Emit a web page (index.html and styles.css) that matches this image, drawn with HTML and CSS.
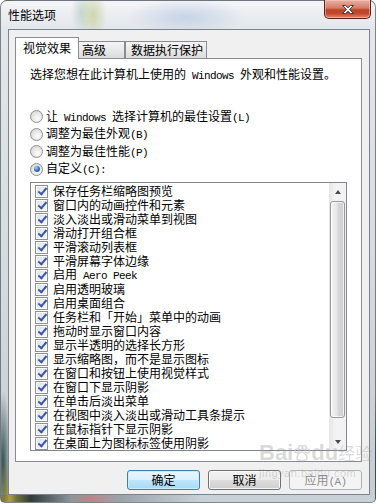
FILE: index.html
```html
<!DOCTYPE html>
<html>
	<head>
		<meta charset="utf-8">
		<title>性能选项</title>
		<link rel="stylesheet" href="styles.css">
	</head>
	<body>
		<div class="window">
			<div class="titlebar">
				<span class="title">性能选项</span>
				<span class="close">
					<svg width="14" height="11" viewBox="0 0 14 11"><path d="M1.5 1.5h3l2.5 2.2 2.5-2.2h3l-4 4 4 4h-3l-2.5-2.2-2.5 2.2h-3l4-4z" fill="#fff" stroke="#3d3d3d" stroke-width="1"/></svg>
				</span>
			</div>
			<div class="client">
				<div class="tabs">
					<span class="tab active tab-visual">视觉效果</span>
					<span class="tab tab-adv">高级</span>
					<span class="tab tab-dep">数据执行保护</span>
				</div>
				<div class="panel">
					<p class="intro">选择您想在此计算机上使用的<span class="en"> Windows </span>外观和性能设置。</p>
					<div class="radios">
						<div class="radio"><span class="dot"></span><span class="label">让<span class="en"> Windows </span>选择计算机的最佳设置<span class="en">(L)</span></span></div>
						<div class="radio"><span class="dot"></span><span class="label">调整为最佳外观<span class="en">(B)</span></span></div>
						<div class="radio"><span class="dot"></span><span class="label">调整为最佳性能<span class="en">(P)</span></span></div>
						<div class="radio"><span class="dot on"></span><span class="label">自定义<span class="en">(C):</span></span></div>
					</div>
					<div class="listbox">
						<ul class="items">
							<li><span class="check"></span><span class="label">保存任务栏缩略图预览</span></li>
							<li><span class="check"></span><span class="label">窗口内的动画控件和元素</span></li>
							<li><span class="check"></span><span class="label">淡入淡出或滑动菜单到视图</span></li>
							<li><span class="check"></span><span class="label">滑动打开组合框</span></li>
							<li><span class="check"></span><span class="label">平滑滚动列表框</span></li>
							<li><span class="check"></span><span class="label">平滑屏幕字体边缘</span></li>
							<li><span class="check"></span><span class="label">启用<span class="en"> Aero Peek</span></span></li>
							<li><span class="check"></span><span class="label">启用透明玻璃</span></li>
							<li><span class="check"></span><span class="label">启用桌面组合</span></li>
							<li><span class="check"></span><span class="label">任务栏和「开始」菜单中的动画</span></li>
							<li><span class="check"></span><span class="label">拖动时显示窗口内容</span></li>
							<li><span class="check"></span><span class="label">显示半透明的选择长方形</span></li>
							<li><span class="check"></span><span class="label">显示缩略图，而不是显示图标</span></li>
							<li><span class="check"></span><span class="label">在窗口和按钮上使用视觉样式</span></li>
							<li><span class="check"></span><span class="label">在窗口下显示阴影</span></li>
							<li><span class="check"></span><span class="label">在单击后淡出菜单</span></li>
							<li><span class="check"></span><span class="label">在视图中淡入淡出或滑动工具条提示</span></li>
							<li><span class="check"></span><span class="label">在鼠标指针下显示阴影</span></li>
							<li><span class="check"></span><span class="label">在桌面上为图标标签使用阴影</span></li>
						</ul>
						<div class="scrollbar">
							<div class="sb-btn"><span class="arrow-up"></span></div>
							<div class="thumb"></div>
							<div class="track"></div>
							<div class="sb-btn"><span class="arrow-down"></span></div>
						</div>
					</div>
				</div>
				<div class="buttons">
					<span class="button default">确定</span>
					<span class="button">取消</span>
					<span class="button disabled">应用<span class="en">(A)</span></span>
				</div>
			</div>
			<div class="watermark">
				<div class="wm-logo">Bai<svg width="18" height="18" viewBox="0 0 18 18"><g fill="none" stroke="#c4c4c4" stroke-width="1.5"><circle cx="4" cy="7" r="2"/><circle cx="7.5" cy="3.5" r="2"/><circle cx="11.5" cy="3.5" r="2"/><circle cx="14.5" cy="7" r="2"/><path d="M9 8c-3 0-5 4-5 6s2 2.5 5 2.5 5-0.5 5-2.5-2-6-5-6z"/></g></svg>du<span class="wm-cn">经验</span></div>
				<div class="wm-url">jingyan.baidu.com</div>
			</div>
		</div>
	</body>
</html>
```

FILE: styles.css
```css
*
{
	box-sizing: border-box;
}

body
{
	margin: 0;
	background-color: #fff;
	font-family: "Noto Sans CJK SC", sans-serif;
	font-size: 12px;
	color: #000;
}

.en
{
	font-family: "Liberation Mono", monospace;
	font-size: 11px;
	letter-spacing: -0.6px;
	white-space: pre;
}

/* aero glass frame */
.window
{
	position: relative;
	width: 376px;
	height: 503px;
	padding: 0 5px 7px 7px;
	display: flex;
	flex-direction: column;
	border: 1px solid rgba(40, 48, 58, 0.55);
	border-radius: 7px 7px 5px 5px;
	background:
		radial-gradient(ellipse 14px 26px at 92px 14px, rgba(196, 206, 150, 0.75), transparent),
		radial-gradient(ellipse 10px 22px at 80px 12px, rgba(170, 200, 190, 0.6), transparent),
		radial-gradient(ellipse 60px 18px at 185px 16px, rgba(176, 194, 224, 0.6), transparent),
		radial-gradient(ellipse 8px 70px at 2px 460px, rgba(40, 70, 70, 0.9), transparent),
		radial-gradient(ellipse 10px 40px at 5px 495px, rgba(190, 170, 50, 0.95), transparent),
		linear-gradient(to right, #b9a93e 0, #2f3b3d 30px, #8d959c 70px, #b9868a 90px, #9aa3ab 120px, #c8d0d8 200px) bottom / 100% 7px no-repeat,
		linear-gradient(to bottom, #f3f5f7 0, #e3e7eb 28px, #d3d9de 60%, #c5ccd2 100%);
}

.titlebar
{
	height: 28px;
	display: flex;
	justify-content: space-between;
	align-items: flex-start;
}

.title
{
	margin: 6px 0 0 0;
	line-height: 16px;
}

.close
{
	width: 47px;
	height: 19px;
	margin-top: -1px;
	margin-right: -1px;
	display: flex;
	align-items: center;
	justify-content: center;
	border: 1px solid #5a221a;
	border-top: none;
	border-radius: 0 0 5px 5px;
	background: linear-gradient(to bottom, #e9b2a4 0, #d47b66 45%, #c04125 55%, #c2482c 75%, #e08a6e 100%);
	box-shadow: inset 0 0 0 1px rgba(255, 210, 200, 0.5);
}

.client
{
	flex: 1;
	display: flex;
	flex-direction: column;
	border: 1px solid #7c838c;
	background-color: #f0f0f0;
}

/* tabs */
.tabs
{
	display: flex;
	align-items: flex-end;
	height: 28px;
	padding-left: 6px;
}

.tab
{
	height: 17px;
	line-height: 15px;
	border: 1px solid #898c95;
	border-bottom: none;
	background: linear-gradient(to bottom, #f4f4f4, #e9e9e9 50%, #dcdcdc);
}

.tab.active
{
	height: 22px;
	margin-bottom: -1px;
	padding-top: 2px;
	position: relative;
	z-index: 1;
	background: #fff;
}

.tab-visual
{
	width: 64px;
	padding-left: 7px;
}

.tab-adv
{
	width: 46px;
	padding-left: 3px;
	border-left: none;
}

.tab-dep
{
	width: 82px;
	padding-left: 5px;
}

.panel
{
	height: 404px;
	margin: 0 7px 0 6px;
	padding: 0 14px;
	border: 1px solid #898c95;
	background-color: #fff;
}

.intro
{
	margin: 7px 0 0 0;
	line-height: 16px;
	white-space: nowrap;
}

.radios
{
	margin-top: 24px;
}

.radio
{
	height: 17.5px;
	display: flex;
	align-items: center;
}

.label
{
	line-height: 14px;
	white-space: nowrap;
}

.dot
{
	position: relative;
	width: 13px;
	height: 13px;
	margin-right: 3px;
	flex: none;
	border: 1px solid #8e8f8f;
	border-radius: 50%;
	background: radial-gradient(circle at 60% 65%, #fdfdfd 0, #e6e6e6 50%, #cfcfcf 100%);
}

.dot.on::after
{
	content: "";
	position: absolute;
	left: 2.5px;
	top: 2.5px;
	width: 6px;
	height: 6px;
	border-radius: 50%;
	background: radial-gradient(circle at 35% 30%, #b5d3f5 0, #3a78c8 45%, #1b3f86 100%);
}

/* list with checkboxes */
.listbox
{
	display: flex;
	height: 269px;
	margin-top: 4px;
	border: 1px solid #828790;
}

.items
{
	flex: 1;
	margin: 0;
	padding: 1px 0 0 4px;
	list-style: none;
}

.items li
{
	height: 14px;
	display: flex;
	align-items: center;
}

.check
{
	position: relative;
	width: 13px;
	height: 13px;
	margin-right: 5px;
	flex: none;
	border: 1px solid #8e8f8f;
	background: linear-gradient(135deg, #dbe2ec 0, #f4f6f9 100%);
	box-shadow: inset 0 0 0 1px #fff;
}

.check::after
{
	content: "";
	position: absolute;
	left: 3.5px;
	top: 0.5px;
	width: 3px;
	height: 7px;
	border-right: 2px solid #3f57a0;
	border-bottom: 2px solid #3f57a0;
	transform: rotate(40deg);
}

.scrollbar
{
	width: 17px;
	display: flex;
	flex-direction: column;
	background: linear-gradient(to right, #e6e6e6, #f4f4f4 40%, #f1f1f1);
}

.sb-btn
{
	height: 17px;
	display: flex;
	align-items: center;
	justify-content: center;
}

.arrow-up
{
	border-left: 3.5px solid transparent;
	border-right: 3.5px solid transparent;
	border-bottom: 4px solid #4a4a4a;
}

.arrow-down
{
	border-left: 3.5px solid transparent;
	border-right: 3.5px solid transparent;
	border-top: 4px solid #4a4a4a;
}

.thumb
{
	height: 217px;
	margin: 1px 1px 0 1px;
	border: 1px solid #979797;
	border-radius: 3px;
	background: linear-gradient(to right, #f5f5f5, #e6e6e6 45%, #d6d6d6 55%, #cfcfcf);
	box-shadow: inset 0 0 0 1px rgba(255, 255, 255, 0.7);
}

.track
{
	flex: 1;
}

/* dialog buttons */
.buttons
{
	display: flex;
	justify-content: flex-end;
	gap: 8px;
	margin: 8px 7px 0 0;
}

.button
{
	width: 73px;
	height: 20px;
	line-height: 18px;
	text-align: center;
	border: 1px solid #707070;
	border-radius: 3px;
	background: linear-gradient(to bottom, #f2f2f2 0, #ebebeb 50%, #dddddd 50%, #cfcfcf 100%);
	box-shadow: inset 0 0 0 1px rgba(255, 255, 255, 0.8);
}

.button.default
{
	border-color: #3c7fb1;
	background: linear-gradient(to bottom, #eaf6fd 0, #d9f0fc 50%, #bee6fd 50%, #a7d9f5 100%);
	box-shadow: inset 0 0 0 1px #c9ecff;
}

.button.disabled
{
	color: #8d8d8d;
	border-color: #adb2b5;
	background: #f4f4f4;
	box-shadow: none;
}

/* baidu watermark lying over the dialog */
.watermark
{
	position: absolute;
	left: 258px;
	top: 440px;
	color: rgba(150, 150, 150, 0.35);
	pointer-events: none;
}

.wm-logo
{
	display: flex;
	align-items: center;
	font-family: "Liberation Sans", sans-serif;
	font-size: 22px;
	font-weight: bold;
	line-height: 24px;
}

.wm-logo svg
{
	opacity: 0.6;
}

.wm-cn
{
	font-family: "Noto Sans CJK SC", sans-serif;
	font-size: 17px;
	font-weight: normal;
}

.wm-url
{
	margin-top: 2px;
	font-family: "Liberation Sans", sans-serif;
	font-size: 11px;
	letter-spacing: 0.5px;
}
```
